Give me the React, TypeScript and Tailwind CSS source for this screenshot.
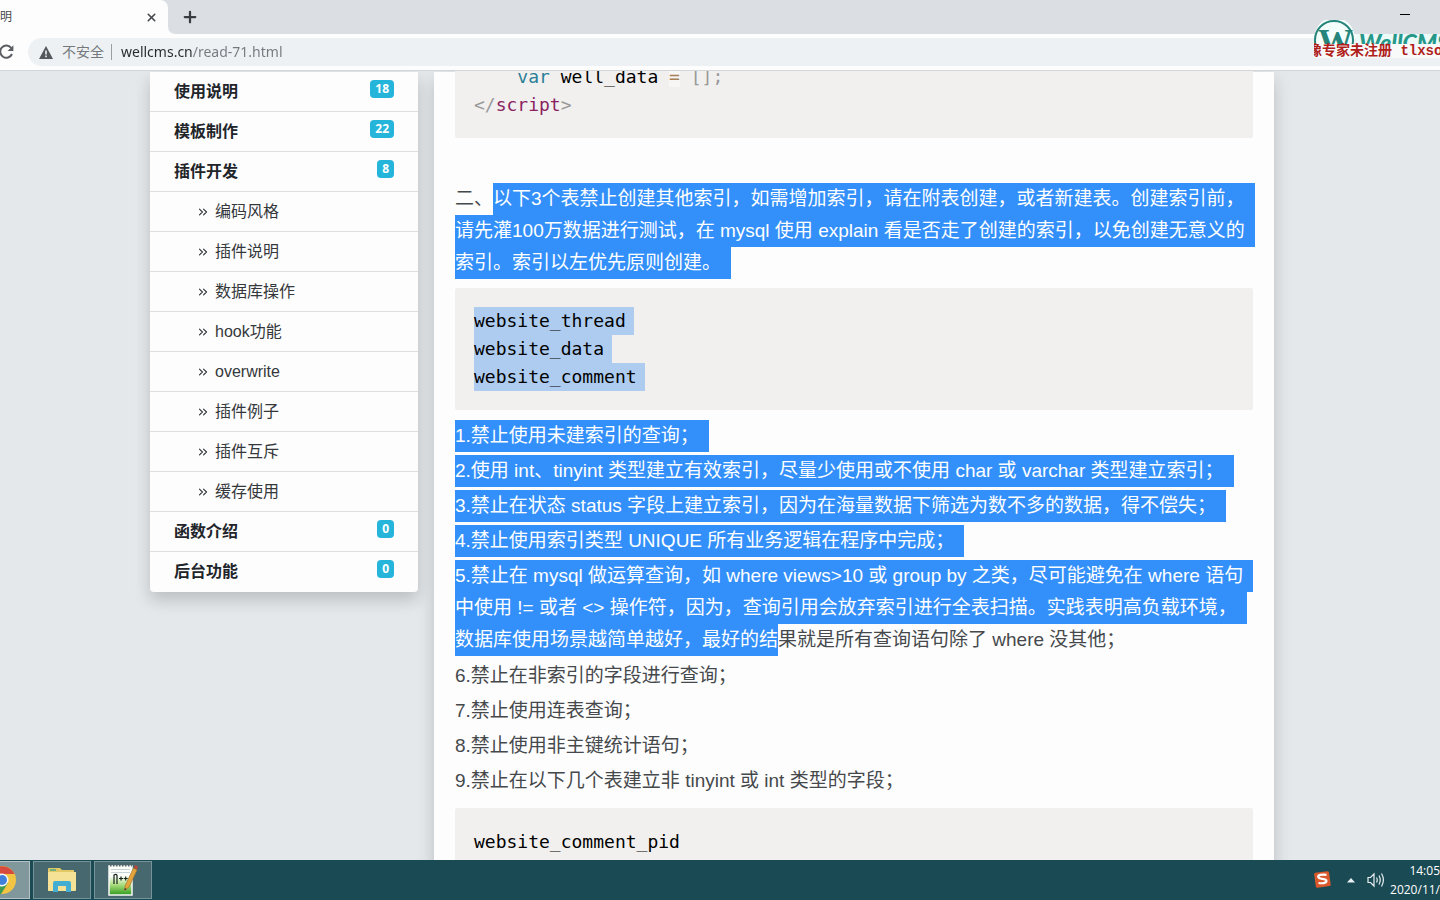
import type { ReactNode } from 'react';
import { ChevronsRight, Plus, X } from 'lucide-react';

type NavItem = {
  label: string;
  count?: number;
};

const navItems: NavItem[] = [
  { label: '使用说明', count: 18 },
  { label: '模板制作', count: 22 },
  { label: '插件开发', count: 8 },
  { label: '编码风格' },
  { label: '插件说明' },
  { label: '数据库操作' },
  { label: 'hook功能' },
  { label: 'overwrite' },
  { label: '插件例子' },
  { label: '插件互斥' },
  { label: '缓存使用' },
  { label: '函数介绍', count: 0 },
  { label: '后台功能', count: 0 },
];

const selectedRules = [
  '1.禁止使用未建索引的查询；',
  '2.使用 int、tinyint 类型建立有效索引，尽量少使用或不使用 char 或 varchar 类型建立索引；',
  '3.禁止在状态 status 字段上建立索引，因为在海量数据下筛选为数不多的数据，得不偿失；',
  '4.禁止使用索引类型 UNIQUE 所有业务逻辑在程序中完成；',
];

const plainRules = [
  '6.禁止在非索引的字段进行查询；',
  '7.禁止使用连表查询；',
  '8.禁止使用非主键统计语句；',
  '9.禁止在以下几个表建立非 tinyint 或 int 类型的字段；',
];

const Selected = ({ children, tail = true }: { children: ReactNode; tail?: boolean }) => (
  <span className={`inline-block h-8 bg-[#3390fb] align-top text-white ${tail ? 'pr-2.5' : ''}`}>{children}</span>
);

const CodeBlock = ({ children, className = '' }: { children: ReactNode; className?: string }) => (
  <pre
    className={`rounded-xs bg-[#f1f0ef] px-[19px] pb-[19px] font-['DejaVu_Sans_Mono',monospace] text-lg leading-7 text-black ${className}`}
  >
    {children}
  </pre>
);

const TabStrip = () => (
  <div className="flex h-[34px] bg-[#dbdee3]">
    <div className="flex w-[168px] items-center justify-between rounded-tr-lg bg-[#fdfdfe] pr-2.5 text-xs text-[#45494d]">
      <span>明</span>
      <button aria-label="关闭标签页" className="text-[#45494d]">
        <X size={13} strokeWidth={3} />
      </button>
    </div>
    <svg width="8" height="8" viewBox="0 0 8 8" className="self-end" aria-hidden="true">
      <path d="M0 0 Q0 8 8 8 H0Z" fill="#fdfdfe" />
    </svg>
    <button aria-label="新标签页" className="ml-[5px] text-[#3a3e42]">
      <Plus size={18} strokeWidth={3} />
    </button>
    <button aria-label="最小化" className="mr-[30px] ml-auto self-start pt-3.5">
      <span className="block h-px w-2.5 bg-black" />
    </button>
  </div>
);

const AddressBar = () => (
  <div className="flex h-[37px] items-center border-b border-[#d3d6d8] bg-[#fdfdfe]">
    <button aria-label="重新加载" className="w-7">
      <svg width="14" height="16" viewBox="0 0 14 16" aria-hidden="true">
        <path d="M11.4 4.2 A6.1 6.1 0 1 0 12 10" fill="none" stroke="#5a5e62" strokeWidth="2" />
        <path d="M13.4 1.2 V7 H7.6 Z" fill="#5a5e62" />
      </svg>
    </button>
    <div className="flex h-7 flex-1 items-center rounded-l-full bg-[#eef1f3] pl-[11px] text-sm text-[#75797d]">
      <svg width="14" height="13" viewBox="0 0 14 13" aria-hidden="true">
        <path d="M7 0 L14 13 H0Z" fill="#54585c" />
        <path d="M6.2 4.6h1.6v4H6.2zM6.2 9.6h1.6v1.6H6.2z" fill="#eef1f3" />
      </svg>
      <label htmlFor="address" className="ml-[9px]">
        不安全
      </label>
      <span className="ml-[7px] h-4 w-px bg-[#9a9ea2]" />
      <input
        id="address"
        type="text"
        defaultValue="wellcms.cn/read-71.html"
        className="ml-[9px] flex-1 bg-[linear-gradient(90deg,#27292c_72px,#75797d_72px)] bg-clip-text font-['Noto_Sans',sans-serif] text-sm text-transparent outline-none"
      />
    </div>
  </div>
);

const Watermark = () => (
  <div className="absolute top-5 right-0 w-[126px] overflow-hidden">
    <svg width="126" height="24" viewBox="0 0 126 24" className="block" role="img" aria-label="WellCMS">
      <path d="M2 25 A20 20 0 1 1 39 25Z" fill="#f4fffc" />
      <path d="M42 14 H126 V24 H42Z" fill="#ecfbf8" />
      <circle cx="20" cy="20" r="19" fill="none" stroke="#26857a" strokeWidth="2" />
      <text x="4" y="34" fontFamily="Liberation Serif, serif" fontWeight="700" fontSize="35" fill="#26857a">
        W
      </text>
      <text x="45" y="31" fontFamily="Lato, sans-serif" fontWeight="900" fontStyle="italic" fontSize="23" fill="#26988a">
        WellCMS
      </text>
    </svg>
    <div className="bg-[#f8fafa] font-['Liberation_Mono','Noto_Sans_CJK_SC',monospace] text-sm leading-[14px] font-bold whitespace-nowrap text-[#b01f1c]">
      <span className="-ml-1.5">像专家未注册 tlxso</span>
    </div>
  </div>
);

const Sidebar = () => (
  <nav className="w-[268px] shrink-0 self-start rounded-b-sm bg-[#fdfdfe] shadow-[0_8px_16px_rgba(0,0,0,0.18)]">
    {navItems.map(({ label, count }) => (
      <a
        key={label}
        href="#"
        className="flex h-10 items-center border-b border-[#dcdee0] px-6 text-base text-[#35383b] last:border-b-0"
      >
        {count === undefined ? (
          <>
            <ChevronsRight size={14} strokeWidth={2} className="mr-[5px] ml-[22px]" />
            {label}
          </>
        ) : (
          <>
            <span className="font-bold text-[#212529]">{label}</span>
            <span className="mt-2 ml-auto self-start rounded bg-[#26b5da] px-[5px] font-['Open_Sans',sans-serif] text-xs leading-[18px] font-bold text-white">
              {count}
            </span>
          </>
        )}
      </a>
    ))}
  </nav>
);

const Article = () => (
  <main className="min-w-0 flex-1 bg-[#fdfdfe] px-[21px] shadow-[0_8px_16px_rgba(0,0,0,0.18)]">
    {/* the page is scrolled, so the first block starts above the viewport */}
    <CodeBlock className="-mt-[9px]">
      {'    '}
      <span className="text-[#2b7f97]">var</span> well_data <span className="bg-[#f8f6f4] text-[#a67f59]">=</span>{' '}
      <span className="text-[#999]">[];</span>
      {'\n'}
      <span className="text-[#999]">&lt;/</span>
      <span className="text-[#8a1f62]">script</span>
      <span className="text-[#999]">&gt;</span>
    </CodeBlock>

    <div className="text-[19px] leading-8 whitespace-nowrap text-[#46494c]">
      <p className="mt-[45px]">
        二、<Selected>以下3个表禁止创建其他索引，如需增加索引，请在附表创建，或者新建表。创建索引前，</Selected>
        <br />
        <Selected>请先灌100万数据进行测试，在 mysql 使用 explain 看是否走了创建的索引，以免创建无意义的</Selected>
        <br />
        <Selected>索引。索引以左优先原则创建。</Selected>
      </p>

      <CodeBlock className="mt-[9px] mb-2.5 pt-[19px]">
        {['website_thread', 'website_data', 'website_comment'].map((name) => (
          <span key={name} className="block w-fit bg-[#aeccef] pr-2">
            {name}
          </span>
        ))}
      </CodeBlock>

      <div className="flex flex-col gap-[3px]">
        {selectedRules.map((rule) => (
          <p key={rule}>
            <Selected>{rule}</Selected>
          </p>
        ))}
        <p>
          <Selected>5.禁止在 mysql 做运算查询，如 where views&gt;10 或 group by 之类，尽可能避免在 where 语句</Selected>
          <br />
          <Selected>中使用 != 或者 &lt;&gt; 操作符，因为，查询引用会放弃索引进行全表扫描。实践表明高负载环境，</Selected>
          <br />
          <Selected tail={false}>数据库使用场景越简单越好，最好的结</Selected>果就是所有查询语句除了 where 没其他；
        </p>
        <div className="flex flex-col gap-[3px] pt-px">
          {plainRules.map((rule) => (
            <p key={rule}>{rule}</p>
          ))}
        </div>
      </div>

      <CodeBlock className="mt-[11px] pt-5">website_comment_pid</CodeBlock>
    </div>
  </main>
);

const Taskbar = () => (
  <footer className="flex h-10 shrink-0 items-center bg-[#1a4a54] text-white">
    <button aria-label="Chrome" className="h-[38px] w-[30px] border border-l-0 border-[#b4c2c5] bg-[#80979c]">
      <svg width="29" height="36" viewBox="0 0 29 36" aria-hidden="true">
        <circle cx="2" cy="18" r="14" fill="#f2c443" />
        <path d="M-10 11 A14 14 0 0 1 14.6 12 H2 Z" fill="#d64b3d" />
        <path d="M-12 18 L-4 22 L8 21 L1 32 A14 14 0 0 1 -12 18Z" fill="#3f9a52" />
        <circle cx="2" cy="18" r="6.5" fill="#f4f6f7" />
        <circle cx="2" cy="18" r="5" fill="#3f7fdc" />
      </svg>
    </button>
    <button
      aria-label="文件资源管理器"
      className="ml-[3px] flex h-[38px] w-[58px] items-center justify-center border border-[#77939a] bg-[#47686f]"
    >
      <svg width="30" height="26" viewBox="0 0 30 26" aria-hidden="true">
        <path d="M1 2 Q1 1 2 1 H13 L15 3 H27 V24 H1Z" fill="#e3c866" />
        <path d="M3 2h6v2H3z" fill="#6fb27b" />
        <path d="M1 5 H29 V23 Q29 24 28 24 H2 Q1 24 1 23Z" fill="#f5e296" />
        <path d="M6 25 V16 Q6 14 8 14 H22 Q24 14 24 16 V25 H19 V19 H11 V25Z" fill="#43aed1" />
      </svg>
    </button>
    <button
      aria-label="Notepad++"
      className="ml-[3px] flex h-[38px] w-[58px] items-center justify-center border border-[#77939a] bg-[#47686f]"
    >
      <svg width="32" height="34" viewBox="0 0 32 34" aria-hidden="true">
        <defs>
          <linearGradient id="notepad" x1="0" y1="0" x2="0" y2="1">
            <stop offset="0.35" stopColor="#fafdf8" />
            <stop offset="0.65" stopColor="#a9dc7d" />
            <stop offset="1" stopColor="#2f9a1d" />
          </linearGradient>
        </defs>
        <path d="M2 3 H25 V32 H2Z" fill="url(#notepad)" stroke="#f6f8f6" strokeWidth="1.5" />
        <path d="M3 2.5 H25" stroke="#5a6668" strokeWidth="2" strokeDasharray="1.5 1.5" />
        <path d="M4 6.5H23M4 9.5H23" stroke="#c6d2d6" />
        <path d="M7 21V12Q9.500 10.500 10 12.500V21M12 15.500h4M14 13.500v4M16.700 15.500h4M18.700 13.500v4" fill="none" stroke="#17221a" strokeWidth="1.2" />
        <path d="M26.500 5 L30 7 L22 24 L17.500 27.500 L18.500 22Z" fill="#e4a63c" stroke="#a87428" strokeWidth="0.7" />
        <path d="M26.800 4.500 L28 2 L31.300 3.800 L30.200 6.500Z" fill="#b5483c" />
        <path d="M17.900 25 L17.500 27.500 L19.500 26Z" fill="#2b2b2b" />
      </svg>
    </button>

    <div className="ml-auto flex items-center">
      <svg width="18" height="18" viewBox="0 0 18 18" aria-hidden="true">
        <rect x="2" y="1" width="15" height="15" rx="1.5" fill="#d9592b" transform="rotate(-8 9 9)" />
        <path
          d="M13.500 3.800 Q6 3 5.200 5.300 Q5 7.500 9.300 7.800 Q14 8.300 13.400 10.500 Q12.500 12.800 5.500 12"
          fill="none"
          stroke="#fff"
          strokeWidth="2.2"
        />
      </svg>
      <svg width="8" height="5" viewBox="0 0 8 5" className="ml-4" aria-hidden="true">
        <path d="M4 0 L8 4.5 H0Z" fill="#e8f0f2" />
      </svg>
      <svg width="18" height="16" viewBox="0 0 18 16" className="ml-3" aria-hidden="true">
        <path
          d="M1 5.5 H3.5 L7 2 V14 L3.5 10.5 H1Z M9.5 5.5 Q11 8 9.5 10.5 M12 3.5 Q14.5 8 12 12.5 M14.5 1.5 Q18.3 8 14.5 14.5"
          fill="none"
          stroke="#e8f0f2"
          strokeWidth="1.2"
        />
      </svg>
      <div className="ml-[5px] text-right font-['Open_Sans',sans-serif] text-xs leading-[19px]">
        <p>14:05</p>
        <p>2020/11/</p>
      </div>
    </div>
  </footer>
);

export default function App() {
  return (
    <div className="relative flex h-screen flex-col overflow-hidden bg-[#e4e8eb] font-['Liberation_Sans','Noto_Sans_CJK_SC',sans-serif]">
      <header className="shrink-0">
        <TabStrip />
        <AddressBar />
      </header>
      <Watermark />
      <div className="min-h-0 flex-1 overflow-hidden pt-px pr-4">
        <div className="mx-auto flex max-w-[1124px] gap-4">
          <Sidebar />
          <Article />
        </div>
      </div>
      <Taskbar />
    </div>
  );
}
